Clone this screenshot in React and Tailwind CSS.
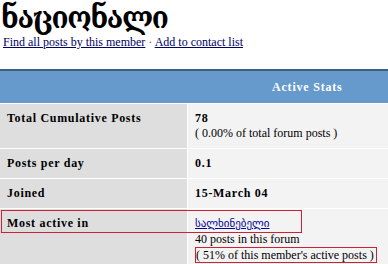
import React from 'react'

const serif = "font-['Liberation_Serif','DejaVu_Serif',serif]"

function Row({ label, children, className = '' }) {
  return (
    <>
      <div className={`bg-[#dedede] px-[7px] py-[7px] font-bold tracking-[0.7px] ${className}`}>{label}</div>
      <div className={`bg-[#f3f3f3] pl-[7px] py-[7px] ${className}`}>{children}</div>
    </>
  )
}

export default function App() {
  return (
    <div className={`w-[388px] h-[264px] overflow-hidden bg-white text-black text-[12px] leading-[15px] ${serif}`}>
      <h1 className="font-['DejaVu_Serif_Condensed','DejaVu_Serif',serif] font-bold text-[31px] leading-[34px] pl-[1px] tracking-[-1.4px]">ნაციონალი</h1>
      <div className="text-[12px] leading-[14px] pl-[3px] mt-[1px]">
        <a href="#" className="text-[#000066] underline">Find all posts by this member</a>
        <span className="text-[#555]"> · </span>
        <a href="#" className="text-[#000066] underline">Add to contact list</a>
      </div>
      <div className="relative mt-[20px] border-t-2 border-[#3f5f80]">
        <div className="grid grid-cols-[187px_1fr] gap-[1px] bg-white">
          <div className="col-span-2 h-[32px] bg-[#6699cc] flex items-center pl-[272px] text-white font-bold tracking-[0.8px]">
            Active Stats
          </div>
          <Row label="Total Cumulative Posts">
            <div className="font-bold tracking-[0.7px]">78</div>
            <div>( 0.00% of total forum posts )</div>
          </Row>
          <Row label="Posts per day">
            <div className="font-bold tracking-[0.7px]">0.1</div>
          </Row>
          <Row label="Joined">
            <div className="font-bold tracking-[0.7px]">15-March 04</div>
          </Row>
          <Row label="Most active in" className="h-[80px]">
            <a href="#" className="font-['DejaVu_Sans',sans-serif] text-[11px] text-[#000099] underline">სალხინებელი</a>
            <div className="mt-[1px]">40 posts in this forum</div>
            <span className="inline-block border border-[#cc2233] pr-[2px] leading-[14px]">( 51% of this member's active posts )</span>
          </Row>
        </div>
        <div className="absolute left-[1px] top-[139px] w-[301px] h-[23px] border border-[#cc2233]" />
      </div>
    </div>
  )
}
